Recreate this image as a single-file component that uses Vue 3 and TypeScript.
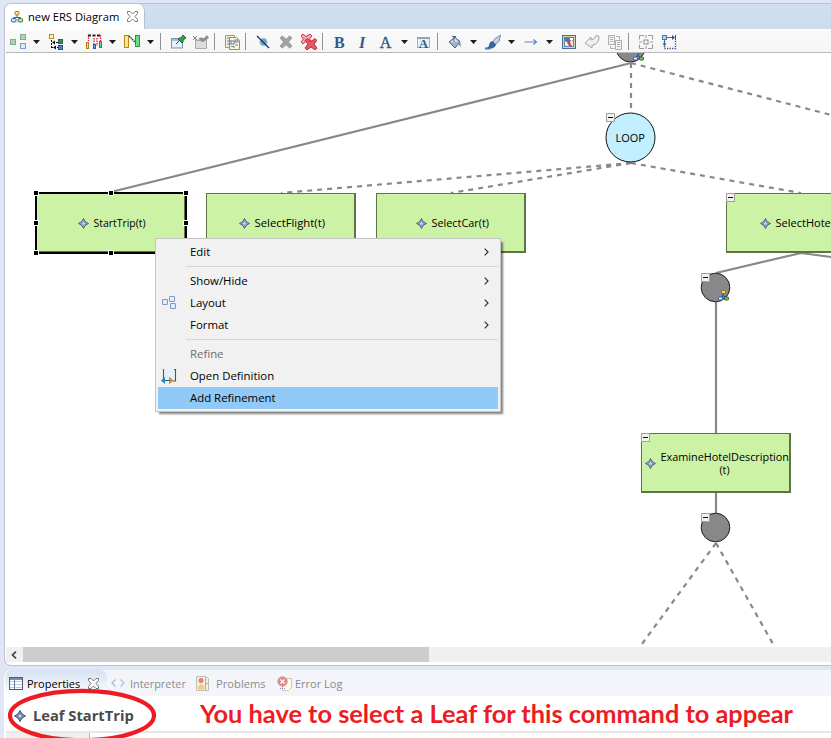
<script setup lang="ts">
interface Tool {
  kind: 'button' | 'drop' | 'sep'
  icon?: string
}
interface LeafNode {
  x: number
  y: number
  label: string
  textX: number
  textW: number
  iconX: number
}
interface MenuEntry {
  label?: string
  sub?: boolean
  icon?: 'layout' | 'definition'
  disabled?: boolean
  active?: boolean
}

const icons: Record<string, string> = {
  arrange:
    '<g stroke-width="1"><rect x=".5" y="5.500" width="5" height="5" fill="#a9d7a8" stroke="#7fae92"/><rect x="10.500" y=".5" width="5" height="5" fill="#a9d7a8" stroke="#7fae92"/><rect x="10.500" y="9.500" width="5" height="5" fill="#d9ebfb" stroke="#7c9cc9"/></g>',
  select:
    '<rect x="1.500" y=".5" width="4" height="4" fill="#fff3bf" stroke="#b98d1c"/><path d="M3.500 6v8M5 8.500h5M3 13.500h7" stroke="#111" stroke-dasharray="2 1" fill="none"/><path d="M4 8.500l3-2v4zM5 13.500l3-2v4z" fill="#111"/><rect x="10.500" y="5.500" width="4" height="4" fill="#3a8a4d" stroke="#2c6250"/><rect x="10.500" y="11.500" width="4" height="4" fill="#4f7fd0" stroke="#2d4f8e"/>',
  align:
    '<path d="M2.500 1v6M8 4v6M11 4v8M14.500 1v6" stroke="#f0132a" stroke-dasharray="1.500 1" stroke-width="1.300"/><path d="M2 1.500h13" stroke="#222" stroke-width="2" stroke-dasharray="3 1.500"/><rect x=".5" y="8.500" width="2" height="6" fill="#f8dc7c" stroke="#ad7e1d"/><rect x="7.500" y="10.500" width="2" height="4" fill="#6d97e0" stroke="#2f5aa8"/><rect x="13.500" y="7.500" width="2" height="6" fill="#74c889" stroke="#2f8a50"/>',
  distribute:
    '<rect x=".5" y="1.500" width="4" height="12" fill="#fbe58f" stroke="#b58a14"/><path d="M5 2l7 7" stroke="#222" stroke-width="1.300" stroke-dasharray="1.500 .7"/><rect x="11.500" y="1.500" width="4" height="11" fill="#6be07e" stroke="#279447"/>',
  pin:
    '<rect x="1.500" y="4.500" width="11" height="9.500" fill="#e4f2fb" stroke="#7894a4"/><path d="M2 5h10v2H2z" fill="#9cc3df"/><path d="M6 10l4-4" stroke="#565656"/><path d="M8 5l1-1 2 0 2-3 3 3-3 2v2l-1 1z" fill="#37a159" stroke="#176b38"/>',
  unpin:
    '<path d="M2.500 5v9.500h11V5M3 6.500h10" fill="#ddd" stroke="#aaa"/><path d="M0 2l4 4M4 2L0 6" stroke="#888"/><path d="M5 4h2l2-1v1h2l3-3 2 3-3 2h-2v2H9l-2-2z" fill="#929292"/>',
  copypage:
    '<path d="M1.500 1.500h9v12h-9z" fill="#f6f0d6" stroke="#a3966a"/><path d="M5.500 3.500h7l3 3v9h-10z" fill="#fdf5d5" stroke="#a09068"/><path d="M3 4h3M3 7h4M3 10h4" stroke="#6784b0"/><rect x="7" y="7" width="3" height="3" fill="#fff" stroke="#5f7fae"/><rect x="11" y="6" width="3" height="2" fill="#fff" stroke="#5f7fae"/><path d="M7 12.500h3v1.500M11 11h3" stroke="#5f7fae" fill="none"/>',
  hide:
    '<circle cx="8.500" cy="8" r="3.600" fill="#6da6c8" stroke="#9cbdd2"/><path d="M2 2l12 12" stroke="#1c3173" stroke-width="1.300"/>',
  delete:
    '<path d="M2 4l2.200-2.200L8 5.200l3.800-3.400L14 4l-3.500 4 3.500 4-2.200 2.200L8 10.800l-3.800 3.400L2 12l3.500-4z" fill="#a1a1a1" stroke="#8c8c8c" stroke-width=".6"/>',
  deleteAll:
    '<path d="M0 2l2-2 3 2.500L9 0l2 2-2.500 3L11 8 9 10 5.500 7 2 10 0 8l2.500-3z" fill="#f6a6ad" stroke="#d92d42"/><path d="M4 6.500l2-2 4 3 4-3 2 2-3 3.500 3 4-2 2-4-3-4 3-2-2 3-4z" fill="#e05a65" stroke="#c71d34" stroke-width=".9"/>',
  bold: '<text x="7.300" y="14" class="glyph" text-anchor="middle">B</text>',
  italic: '<text x="7" y="14" class="glyph italic" text-anchor="middle">I</text>',
  font: '<text x="7.500" y="14" class="glyph light" text-anchor="middle">A</text>',
  fontBox:
    '<rect x="1.500" y="3.500" width="12" height="10" fill="#e6f2fb" stroke="#9bb3c9"/><path d="M1 4h13" stroke="#8fa9a0" stroke-width="2"/><text x="7.500" y="13.500" class="glyph small" text-anchor="middle">A</text>',
  fill:
    '<path d="M2 8l6-5 5 5-5 6z" fill="#9fb2ca" stroke="#4e6484"/><path d="M3 8.500l5-4 3 3z" fill="#e5edf5"/><path d="M7 2v6M5 2.500h4" stroke="#526785"/><path d="M11 5q3 2 2.500 8-2-2-1-5z" fill="#4377ac"/>',
  brush:
    '<path d="M15.500 1L9.500 5l-2 4 2.500 1.500 4-3z" fill="#c4d1df" stroke="#7890a9"/><path d="M8 8q-3-1-3.500 4l-2 2q6 1 8-3z" fill="#39699e" stroke="#2d578b"/><path d="M0 14.500h5" stroke="#4d7db2" stroke-width="2"/>',
  arrow: '<path d="M1.500 8h12M10.500 5.500L13.500 8l-3 2.500" stroke="#5a8bc4" fill="none" stroke-width="1.200"/>',
  image:
    '<rect x="1.500" y="1.500" width="13" height="13" fill="#d9d3b2" stroke="#4c6b91"/><rect x="3.500" y="3.500" width="9" height="9" fill="#487bbc" stroke="#5f82ae"/><path d="M4 12V7l4 2 3-4 1 3v4z" fill="#f3e9e9"/><path d="M6 5l3 2 1 5H8L6 8zM9 9l2 3H9z" fill="#cc4545"/><path d="M9 4h3v2H9z" fill="#fff"/>',
  apply:
    '<path d="M1 9l6-6v3q4-.5 5-4.500l3 1q.5 7-7 9V14z" fill="#efefef" stroke="#a2a2a2"/>',
  duplicate:
    '<path d="M1.500 1.500h6v9h-6z M8.500 6.500h6v9h-6z" fill="#f5f5f5" stroke="#adadad"/><path d="M3 3.500h3M3 5.500h3M3 7.500h3M10 8.500h3M10 10.500h3M10 12.500h3M9 2.500h3.500v3M3.500 12v2.500h4" stroke="#adadad" fill="none"/>',
  zoomArea:
    '<path d="M1.500 5.500v-4h4.500M10 1.500h4.500v4M14.500 10.500v4H10M6 14.500H1.500v-4" stroke="#999" fill="none"/><rect x="6" y="6" width="4" height="4" fill="#fff" stroke="#888"/><path d="M8 1v3M8 12v3M1 8h3M12 8h3" stroke="#999"/>',
  snap:
    '<path d="M3.500 7v7.500h11V6" fill="none" stroke="#36548d" stroke-width="1.400" stroke-dasharray="1.300 1.200"/><path d="M6 3.500h6" stroke="#46658e"/><path d="M3.500 6v4" stroke="#46658e"/><path d="M11 1l3 2.500L11 6zM1.500 9.500h4L3.500 12z" fill="#36548d"/><path d="M14.500 1v5" stroke="#36548d"/><rect x="1.500" y="1.500" width="4" height="4" fill="#a9d8ee" stroke="#4e7ba4"/>',
}

const b = (icon: string): Tool => ({ kind: 'button', icon })
const d: Tool = { kind: 'drop' }
const s: Tool = { kind: 'sep' }
const tools: Tool[] = [
  b('arrange'), d, b('select'), d, b('align'), d, b('distribute'), d, s,
  b('pin'), b('unpin'), s, b('copypage'), s,
  b('hide'), b('delete'), b('deleteAll'), s,
  b('bold'), b('italic'), b('font'), d, b('fontBox'), s,
  b('fill'), d, b('brush'), d, b('arrow'), d, b('image'), b('apply'), b('duplicate'), s,
  b('zoomArea'), b('snap'),
]

const leaves: LeafNode[] = [
  { x: 36, y: 193, label: 'StartTrip(t)', textX: 93.5, textW: 52, iconX: 83.5 },
  { x: 206, y: 193, label: 'SelectFlight(t)', textX: 254.5, textW: 70.5, iconX: 244.5 },
  { x: 376, y: 193, label: 'SelectCar(t)', textX: 431.5, textW: 57.5, iconX: 421.5 },
  { x: 726, y: 193, label: 'SelectHotel(t)', textX: 775.5, textW: 68.5, iconX: 765.5 },
  { x: 641, y: 433, label: 'ExamineHotelDescription', textX: 660.5, textW: 128.5, iconX: 650.5 },
]
const solid = [
  'M111 192L631 63', 'M716 273L801 253L831 257', 'M716 302V433', 'M716 493V513',
]
const dashed = [
  'M631 63V113', 'M631 63L839 117', 'M631 163L281 193', 'M631 163L451 193',
  'M631 163L801 193', 'M716 543L639 648', 'M716 543L777 651',
]
const handles = [[36, 193], [111, 193], [186, 193], [36, 223], [186, 223], [36, 253], [111, 253], [186, 253]]
const toggles = [[606, 113], [701, 273], [701, 513], [726, 193], [641, 433]]
const forks = [[630, 50], [715, 290]]

const menu: MenuEntry[] = [
  { label: 'Edit', sub: true },
  {},
  { label: 'Show/Hide', sub: true },
  { label: 'Layout', sub: true, icon: 'layout' },
  { label: 'Format', sub: true },
  {},
  { label: 'Refine', disabled: true },
  { label: 'Open Definition', icon: 'definition' },
  { label: 'Add Refinement', active: true },
]
</script>

<template>
  <div class="window">
    <section class="editor">
      <header class="tabs">
        <div class="tab">
          <svg class="tab-icon" width="12" height="12" viewBox="0 0 12 12">
            <path d="M6 4v3M2.500 8V6.500h7V8" fill="none" stroke="#46618f" />
            <rect x="4" y=".5" width="4" height="3.500" rx="1" fill="#ffe69b" stroke="#a5780e" />
            <rect x=".5" y="7.500" width="4.500" height="3.500" rx="1" fill="#cfe0fa" stroke="#3560a8" />
            <rect x="7" y="7.500" width="4.500" height="3.500" rx="1" fill="#b9e2a9" stroke="#3d7a3a" />
          </svg>
          <span class="tab-name">new ERS Diagram</span>
          <svg class="close" width="11" height="11" viewBox="0 0 11 11">
            <path d="M.5 .5h2.500L5.500 3 8 .5h2.500v2L8 5.500l2.500 3v2H8L5.500 8 3 10.500H.5v-2L3 5.500l-2.500-3z" />
          </svg>
        </div>
      </header>

      <div class="toolbar">
        <template v-for="(t, i) in tools" :key="i">
          <span v-if="t.kind === 'button'" class="tool">
            <svg width="16" height="16" viewBox="0 0 16 16" v-html="icons[t.icon!]" />
          </span>
          <span v-else-if="t.kind === 'drop'" class="drop">
            <svg width="7" height="4" viewBox="0 0 7 4"><path d="M0 0h7L3.500 4z" fill="#1c1c1c" /></svg>
          </span>
          <span v-else class="sep" />
        </template>
      </div>

      <div class="canvas">
        <svg class="diagram" width="825" height="594" viewBox="6 53 825 594">
          <circle class="junction" cx="630.5" cy="47.500" r="14.500" />
          <g class="edges">
            <path v-for="p in solid" :key="p" :d="p" />
            <path v-for="p in dashed" :key="p" :d="p" stroke-dasharray="5 5" />
          </g>
          <circle class="junction" cx="715.5" cy="287.500" r="14.300" />
          <circle class="junction" cx="715.5" cy="527.500" r="14.300" />
          <circle class="loop" cx="630.5" cy="137.500" r="24.500" />
          <text class="label" x="615.5" y="142" textLength="29.500" lengthAdjust="spacingAndGlyphs">LOOP</text>

          <g v-for="n in leaves" :key="n.label">
            <rect :x="n.x" :y="n.y" width="150" height="60" fill="#5e7445" />
            <rect :x="n.x + 1" :y="n.y + 1" width="147" height="57" fill="#ccf2a6" />
            <path
              :transform="`translate(${n.iconX} ${n.y + 30.5})`"
              d="M0-5L1.800-1.800 5 0 1.800 1.800 0 5-1.800 1.800-5 0-1.800-1.800z"
              fill="#86a3cc" stroke="#41577f" stroke-width=".9"
            />
            <circle :cx="n.iconX" :cy="n.y + 30.5" r="1.200" fill="#d9d8c4" />
            <text
              class="label" :x="n.textX" :y="n.label.startsWith('Examine') ? 461 : 227"
              :textLength="n.textW" lengthAdjust="spacingAndGlyphs"
            >{{ n.label }}</text>
          </g>
          <text class="label" x="719.5" y="474" textLength="10" lengthAdjust="spacingAndGlyphs">(t)</text>

          <rect x="36" y="193" width="150" height="60" fill="none" stroke="#000" stroke-width="2" />
          <path d="M38 251.500H184.500V195" fill="none" stroke="#5e7445" />
          <g v-for="([x, y], i) in handles" :key="'h' + i">
            <rect :x="x - 3" :y="y - 3" width="6" height="6" fill="#fff" />
            <rect :x="x - 2" :y="y - 2" width="4" height="4" fill="#000" />
          </g>

          <g v-for="([x, y], i) in toggles" :key="'t' + i" :transform="`translate(${x} ${y})`">
            <rect x=".5" y=".5" width="8" height="8" fill="#f1f1f1" stroke="#a2a2a2" />
            <path d="M2 4.500h5" stroke="#111" />
          </g>
          <g v-for="([x, y], i) in forks" :key="'f' + i" :transform="`translate(${x} ${y})`">
            <path d="M8 3v3M5.500 8L8 5.500 11 8" fill="none" stroke="#2f559e" stroke-width="1.200" />
            <rect x="6.500" y=".5" width="4" height="3" rx="1" fill="#ffd95a" stroke="#8e6809" />
            <rect x="3.500" y="7" width="4" height="3" rx="1" fill="#dcebff" stroke="#2e62c0" />
            <rect x="9.500" y="7" width="4" height="3" rx="1" fill="#72ca52" stroke="#236d26" />
          </g>
        </svg>

        <div class="menu">
          <template v-for="(m, i) in menu" :key="i">
            <div v-if="m.label" class="item" :class="{ disabled: m.disabled, active: m.active }">
              <span class="gutter">
                <svg v-if="m.icon === 'layout'" width="16" height="14" viewBox="-1 1 16 14">
                  <g fill="#e3eefb" stroke="#7c97c3">
                    <rect x=".5" y="4.500" width="5" height="5" rx=".5" />
                    <rect x="7.500" y="1.500" width="5" height="5" rx=".5" />
                    <rect x="8.500" y="8.500" width="5" height="5" rx=".5" />
                  </g>
                </svg>
                <svg v-if="m.icon === 'definition'" width="16" height="16" viewBox="0 0 16 16">
                  <path d="M2 2h12v10H2z" fill="#e2f0fa" />
                  <path d="M3 1.500h-.5v11M13 1.500h1.500V13H12" fill="none" stroke="#665332" stroke-width="1.100" />
                  <path d="M3 12.500h8" stroke="#245a83" />
                  <path d="M0 12.500l4-3.500v7z" fill="#188bc9" />
                  <path d="M12 12.500L8.500 9.500v6z" fill="#df8a32" stroke="#935817" stroke-width=".5" />
                </svg>
              </span>
              <span class="item-name">{{ m.label }}</span>
              <svg v-if="m.sub" class="chevron" width="5" height="8" viewBox="0 0 5 8">
                <path d="M.7 .7L4 4 .7 7.300" fill="none" stroke="#333" stroke-width="1.200" />
              </svg>
            </div>
            <div v-else class="rule" />
          </template>
        </div>
      </div>

      <div class="scrollbar">
        <span class="scroll-left">
          <svg width="6" height="8" viewBox="0 0 6 8"><path d="M5 .7L1.500 4 5 7.300" fill="none" stroke="#444" stroke-width="1.700" /></svg>
        </span>
        <span class="thumb" />
      </div>
    </section>

    <section class="views">
      <header class="view-tabs">
        <div class="view-tab current">
          <svg width="14" height="13" viewBox="0 0 14 13">
            <rect x=".5" y=".5" width="13" height="12" fill="#fff" stroke="#4d5a73" />
            <path d="M1 2h12" stroke="#6d93bd" stroke-width="2" />
            <path d="M1 4.500h12M1 7.500h12M1 10.500h12" stroke="#b9cbe2" />
            <path d="M5.500 3v9" stroke="#6d7c93" />
          </svg>
          <span class="view-name">Properties</span>
          <svg class="close" width="11" height="11" viewBox="0 0 11 11">
            <path d="M.5 .5h2.500L5.500 3 8 .5h2.500v2L8 5.500l2.500 3v2H8L5.500 8 3 10.500H.5v-2L3 5.500l-2.500-3z" />
          </svg>
        </div>
        <div class="view-tab interpreter">
          <svg width="14" height="8" viewBox="0 0 14 8">
            <path d="M4.500 .5L1 4l3.500 3.500" fill="none" stroke="#a8b9d6" stroke-width="1.300" />
            <path d="M9.500 .5L13 4 9.500 7.500" fill="none" stroke="#9fcbd6" stroke-width="1.300" />
          </svg>
          <span class="view-name">Interpreter</span>
        </div>
        <div class="view-tab problems">
          <svg width="14" height="15" viewBox="0 0 14 15">
            <path d="M.5 .5h9l3 2v12H.5z" fill="#f2efe0" stroke="#bfc0b3" />
            <path d="M9.500 1v13M10 7.500h3" stroke="#9fb5d0" />
            <circle cx="5" cy="4.500" r="2.500" fill="#e58086" />
            <path d="M2.500 13l.5-3 2-1.500L7.500 10l.5 3z" fill="#f3cf7f" stroke="#e2b565" stroke-width=".5" />
          </svg>
          <span class="view-name">Problems</span>
        </div>
        <div class="view-tab errors">
          <svg width="15" height="15" viewBox="0 0 15 15">
            <path d="M5.500 2.500h9v9l-3 3h-6z" fill="#fffbe9" stroke="#d5c9a5" />
            <circle cx="5.500" cy="5.500" r="4.700" fill="#e2868c" stroke="#cf9aa0" />
            <path d="M3.500 3.500l4 4M7.500 3.500l-4 4" stroke="#fff" stroke-width="1.400" />
            <path d="M3 12.500h6" stroke="#7390bd" stroke-dasharray="1 1" />
          </svg>
          <span class="view-name">Error Log</span>
        </div>
      </header>
      <div class="heading">
        <svg class="leaf" width="12" height="12" viewBox="-6 -6 12 12">
          <path d="M0-5.500L2-2 5.500 0 2 2 0 5.500-2 2-5.500 0-2-2z" fill="#6f93c0" stroke="#3c5573" />
          <circle r="1.300" fill="#ded8ba" />
        </svg>
        <h1>Leaf StartTrip</h1>
        <p>You have to select a Leaf for this command to appear</p>
      </div>
      <div class="sheet"><span class="sheet-tab" /></div>
      <svg class="ring" width="152" height="52" viewBox="6 686 152 52">
        <ellipse cx="82" cy="714.500" rx="72" ry="24.700" fill="none" stroke="#ed1c24" stroke-width="4.200" />
      </svg>
    </section>
  </div>
</template>

<style>
body {
  margin: 0;
  overflow: hidden;
}
</style>

<style scoped>
.window {
  width: 831px;
  height: 738px;
  box-sizing: border-box;
  padding: 3px 0 0 4px;
  overflow: hidden;
  background: #e1e6f6;
  font-family: 'Open Sans', 'Noto Sans', sans-serif;
  font-size: 11px;
  color: #000;
  display: flex;
  flex-direction: column;
}
.editor {
  width: 827px;
  height: 663px;
  flex: none;
  box-sizing: border-box;
  border: 1px solid #bcc3d0;
  border-right: 0;
  border-radius: 7px 0 0 7px;
  background: #fff;
  overflow: hidden;
  display: flex;
  flex-direction: column;
}
.tabs {
  height: 25px;
  flex: none;
  display: flex;
  background: linear-gradient(#d1dff0, #cbdcee);
}
.tab {
  width: 140px;
  box-sizing: border-box;
  padding-left: 6px;
  display: flex;
  align-items: center;
  background: #fff;
  border-right: 1px solid #b4bfd0;
  border-radius: 0 7px 0 0;
}
.tab-icon {
  margin-right: 5px;
}
.tab-name {
  width: 99px;
  font-size: 11.2px;
  white-space: nowrap;
}
.close path {
  fill: #fff;
  stroke: #777;
}
.toolbar {
  height: 24px;
  flex: none;
  box-sizing: border-box;
  margin-left: 1px;
  border-top: 2px solid #fff;
  border-bottom: 1px solid #b8b8b8;
  background: linear-gradient(#fafafa, #f5f5f5);
  display: flex;
  align-items: center;
}
.tool {
  width: 19px;
  padding-left: 4px;
  flex: none;
  display: flex;
}
.drop {
  width: 15px;
  flex: none;
  display: flex;
  justify-content: center;
}
.sep {
  width: 5px;
  height: 17px;
  margin-left: 2px;
  border-left: 1px solid #929292;
}
.toolbar :deep(.glyph) {
  font-family: 'Liberation Serif', serif;
  font-size: 16px;
  font-weight: bold;
  fill: #315a88;
}
.toolbar :deep(.glyph.italic) {
  font-style: italic;
}
.toolbar :deep(.glyph.light) {
  font-weight: normal;
  stroke: #315a88;
  stroke-width: 0.4;
}
.toolbar :deep(.glyph.small) {
  font-size: 13px;
}
.canvas {
  position: relative;
  margin-left: 1px;
  height: 594px;
  flex: none;
}
.diagram {
  display: block;
}
.edges path {
  fill: none;
  stroke: #888;
  stroke-width: 2.2;
}
.junction {
  fill: #888;
  stroke: #1e1e1e;
}
.loop {
  fill: #c2efff;
  stroke: #111;
}
.label {
  font-size: 10.7px;
  fill: #000;
}
.menu {
  position: absolute;
  left: 149px;
  top: 185px;
  width: 346px;
  box-sizing: border-box;
  padding: 2px;
  border: 1px solid #c5c5c5;
  background: #f1f1f1;
  box-shadow: 3px 3px 2px -1px rgba(0, 0, 0, 0.5);
}
.item {
  height: 22px;
  display: flex;
  align-items: center;
  font-size: 11.4px;
}
.item.active {
  background: #91c9f7;
}
.item.disabled {
  color: #6d6d6d;
}
.gutter {
  width: 29px;
  padding-left: 3px;
  display: flex;
}
.item-name {
  flex: 1;
  padding-bottom: 2px;
}
.chevron {
  margin-right: 9px;
}
.rule {
  height: 1px;
  margin: 3px 0 3px 28px;
  background: #d5d5d5;
}
.scrollbar {
  margin-left: 1px;
  height: 15px;
  flex: none;
  display: flex;
  background: #f0f0f0;
}
.scroll-left {
  width: 17px;
  padding-right: 1px;
  box-sizing: border-box;
  display: flex;
  align-items: center;
  justify-content: center;
}
.thumb {
  width: 406px;
  background: #cdcdcd;
}
.views {
  position: relative;
  height: 69px;
  margin-top: 4px;
  flex: none;
  background: #fff;
  border-left: 1px solid #fff;
  border-radius: 7px 0 0 0;
}
.view-tabs {
  height: 26px;
  display: flex;
  background: #f4f5fb;
  color: #8b8b8b;
  border-radius: 7px 0 0 0;
}
.view-tab {
  display: flex;
  align-items: center;
  white-space: nowrap;
}
.view-tab.current {
  width: 98px;
  padding-left: 4px;
  color: #000;
  background: linear-gradient(#d5e2f1, #fff);
  border-radius: 7px 7px 0 0;
}
.current .view-name {
  width: 61px;
  margin-left: 4px;
}
.interpreter {
  width: 81px;
  padding-left: 4px;
}
.interpreter .view-name {
  margin-left: 5px;
  font-size: 10.9px;
}
.problems {
  width: 76px;
  padding-left: 4px;
}
.problems .view-name {
  margin-left: 6px;
  font-size: 11.2px;
}
.errors {
  padding-left: 5px;
}
.errors .view-name {
  margin-left: 3px;
}
.heading {
  height: 35px;
  padding-left: 9px;
  display: flex;
  align-items: center;
}
.leaf {
  margin-top: 4px;
}
.heading h1 {
  width: 167px;
  margin: 3px 0 0 7px;
  font-size: 14.7px;
  font-weight: 700;
  color: #4a4a4a;
  white-space: nowrap;
}
.heading p {
  margin: 0;
  font-family: Lato, sans-serif;
  font-size: 25.35px;
  font-weight: 700;
  line-height: 35px;
  color: #ed1c24;
  white-space: nowrap;
}
.sheet {
  height: 8px;
  margin-left: 1px;
  box-sizing: border-box;
  border-top: 2px solid #e7e7e7;
  display: flex;
}
.sheet-tab {
  width: 83px;
  background: #efefef;
  border-right: 1px solid #b5b5b5;
}
.ring {
  position: absolute;
  left: 1px;
  bottom: 0;
}
</style>
